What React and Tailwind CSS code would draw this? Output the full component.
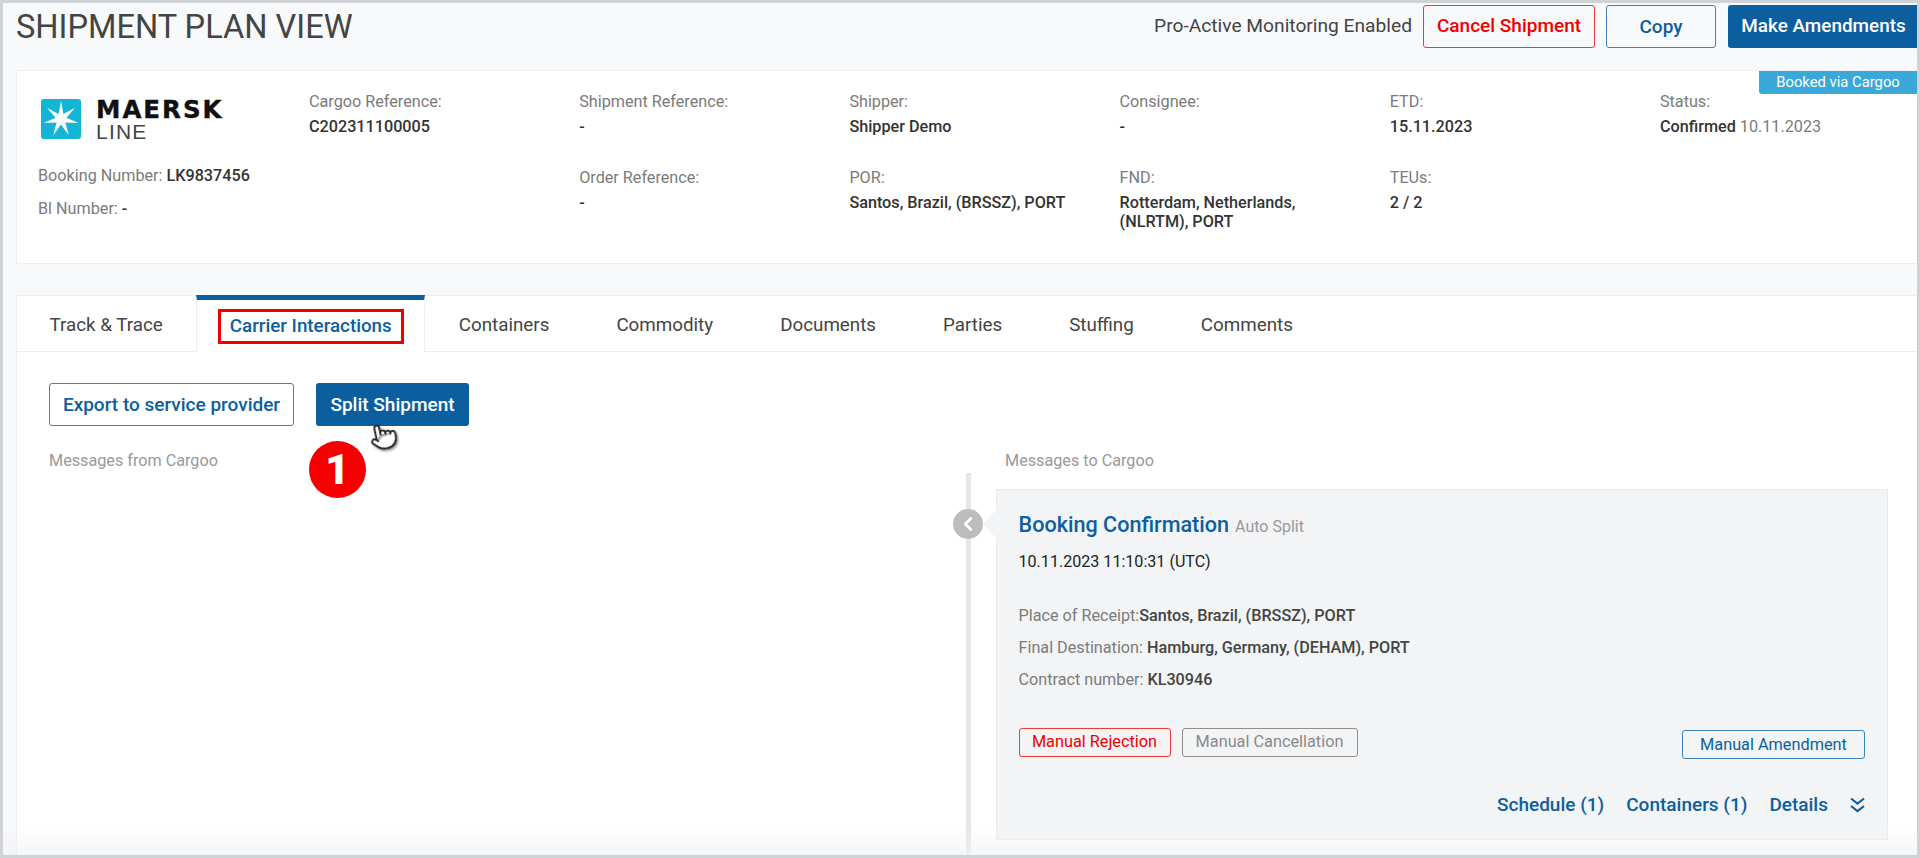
import React from 'react'
import { Pointer, ChevronLeft } from 'lucide-react'

const tabs = ['Track & Trace', 'Carrier Interactions', 'Containers', 'Commodity', 'Documents', 'Parties', 'Stuffing', 'Comments']

const starPoints = Array.from({ length: 14 }, (_, i) => {
  const r = i % 2 === 0 ? 18 : 5.6
  const a = (Math.PI * i) / 7 - Math.PI / 2
  return `${(20 + r * Math.cos(a)).toFixed(2)},${(20 + r * Math.sin(a)).toFixed(2)}`
}).join(' ')

const Info = ({ label, children, extra }) => (
  <div>
    <div className="h-6 text-[16.2px] leading-6 text-[#7b7b7b]">{label}</div>
    <div className="mt-[3px] w-[190px] text-[16.2px] leading-[19px] font-medium text-[#333]">
      {children}
      {extra && <span className="ml-1 font-normal text-[#7b7b7b]">{extra}</span>}
    </div>
  </div>
)

const Logo = () => (
  <div className="ml-[3px] flex h-10 items-start gap-[15px]">
    <svg viewBox="0 0 40 40" className="h-10 w-10 shrink-0">
      <rect width="40" height="40" rx="3" fill="#12b5d6" />
      <polygon points={starPoints} fill="#fff" />
    </svg>
    <div>
      <div className="font-['DejaVu_Sans',sans-serif] text-[24.5px] leading-[21px] font-bold tracking-[2px] text-[#111] [-webkit-text-stroke:0.4px_#111]">MAERSK</div>
      <div className="mt-[3px] font-['Liberation_Sans',sans-serif] text-[21px] leading-[18px] tracking-[1.2px] text-[#444]">LINE</div>
    </div>
  </div>
)

const DoubleChevron = () => (
  <svg viewBox="0 0 15 16" className="h-4 w-[15px]" fill="none" stroke="#0c5f9f" strokeWidth="2.2">
    <path d="M1 1.5l6.5 5 6.5-5" />
    <path d="M1 9l6.5 5 6.5-5" />
  </svg>
)

export default function App() {
  return (
    <div className="relative box-border flex h-[858px] w-[1920px] flex-col overflow-hidden border-[3px] border-[#d0d3d6] bg-[#f8f9fb] font-['Roboto',sans-serif]">
      {/* header */}
      <div className="flex h-[67px] shrink-0 items-start justify-between pt-[2px] pl-[13px]">
        <h1 className="text-[32.6px] leading-[44px] font-normal text-[#444]">SHIPMENT PLAN VIEW</h1>
        <div className="flex items-center">
          <span className="mr-[11px] text-[19.2px] text-[#444]">Pro-Active Monitoring Enabled</span>
          <button className="h-[43px] w-[172px] rounded-[3px] border border-[#f03a3a] text-[19px] font-medium text-[#f00000]">Cancel Shipment</button>
          <button className="ml-[11px] h-[43px] w-[110px] rounded-[3px] border border-[#3a85c0] pt-px text-[19px] font-medium text-[#0c5f9f]">Copy</button>
          <button className="ml-[12px] h-[43px] w-[189px] rounded-l-[3px] bg-[#0c5f9f] pl-[2px] text-[18.9px] font-medium text-white">Make Amendments</button>
        </div>
      </div>

      {/* summary card */}
      <div className="relative ml-[13px] h-[194px] shrink-0 rounded-l-[3px] border border-r-0 border-[#eceef0] bg-white pt-[19px] pl-[21px]">
        <div className="absolute top-0 right-0 flex h-[23px] w-[158px] items-center justify-center rounded-bl-[3px] bg-[#3aa8d8] text-[14.8px] text-white">Booked via Cargoo</div>
        <div className="grid grid-cols-[271px_repeat(6,270.2px)] grid-rows-[76px_auto]">
          <div className="row-span-2 pt-[9px]">
            <Logo />
            <div className="mt-[25px] text-[16.2px] leading-6 text-[#7b7b7b]">Booking Number: <span className="font-medium text-[#333]">LK9837456</span></div>
            <div className="mt-[9px] text-[16.2px] leading-6 text-[#7b7b7b]">Bl Number: <span className="font-medium text-[#333]">-</span></div>
          </div>
          <Info label="Cargoo Reference:">C202311100005</Info>
          <Info label="Shipment Reference:">-</Info>
          <Info label="Shipper:">Shipper Demo</Info>
          <Info label="Consignee:">-</Info>
          <Info label="ETD:">15.11.2023</Info>
          <Info label="Status:" extra="10.11.2023">Confirmed</Info>
          <div className="col-start-3"><Info label="Order Reference:">-</Info></div>
          <Info label="POR:"><span className="whitespace-nowrap">Santos, Brazil, (BRSSZ), PORT</span></Info>
          <Info label="FND:">Rotterdam, Netherlands, (NLRTM), PORT</Info>
          <Info label="TEUs:">2 / 2</Info>
        </div>
      </div>

      {/* tabs + content */}
      <div className="mt-[31px] ml-[13px] flex min-h-0 flex-1 flex-col border-l border-[#eceef0] bg-white">
        <div className="-ml-px flex h-[57px] shrink-0 border-t border-b border-[#eceef0]">
          {tabs.map((tab) =>
            tab === 'Carrier Interactions' ? (
              <div key={tab} className="-mt-px flex h-[57px] w-[229px] items-center justify-center border-x border-t-[5px] border-x-[#eceef0] border-t-[#0c5f9f] bg-white">
                <span className="flex h-[35px] w-[186px] items-center justify-center border-[3px] border-[#f00000] pt-px text-[18.8px] font-medium text-[#0c5f9f]">{tab}</span>
              </div>
            ) : (
              <div key={tab} className="flex items-center px-[33.5px] pt-[3px] text-[18.8px] text-[#444]">{tab}</div>
            )
          )}
        </div>

        <div className="flex min-h-0 flex-1">
          <div className="relative w-[949px] shrink-0 pt-[31px] pl-[32px]">
            <div className="flex gap-[22px]">
              <button className="h-[43px] w-[245px] rounded-[3px] border border-[#3a85c0] pt-[2px] text-[19px] font-medium text-[#0c5f9f]">Export to service provider</button>
              <button className="h-[43px] w-[153px] rounded-[3px] bg-[#0c5f9f] pt-[2px] text-[19px] font-medium text-white">Split Shipment</button>
            </div>
            <div className="mt-[23px] text-[16.2px] leading-6 text-[#999]">Messages from Cargoo</div>
            <Pointer size={29} fill="#fff" stroke="#222" strokeWidth={1.5} className="absolute top-[70px] left-[352px] -rotate-12 drop-shadow-[1px_2px_1px_rgba(0,0,0,0.4)]" />
            <div className="absolute top-[89px] left-[292px] flex h-[57px] w-[57px] items-center justify-center rounded-full bg-[#f50000] text-[42px] font-black text-white">1</div>
          </div>

          <div className="flex min-w-0 flex-1 flex-col pt-[97px]">
            <div className="ml-[39px] text-[16.2px] leading-6 text-[#999]">Messages to Cargoo</div>
            <div className="relative flex-1 border-l-[5px] border-[#e4e6e8] pt-4 pr-[29px] pl-[25px]">
              <div className="absolute top-[36px] left-[-18px] flex h-[30px] w-[30px] items-center justify-center rounded-full bg-[#bdbdbd]">
                <ChevronLeft size={22} stroke="#fff" strokeWidth={3} />
              </div>
              <div className="absolute top-[36px] left-[12px] h-0 w-0 border-y-[15px] border-r-[14px] border-y-transparent border-r-[#f2f4f6]" />
              <div className="h-[351px] border border-[#e8e9eb] bg-[#f2f4f6] pt-[21px] pr-[22px] pl-[21.5px]">
                <div className="flex items-baseline gap-[6px] leading-7">
                  <span className="text-[21.6px] font-medium text-[#0c5f9f]">Booking Confirmation</span>
                  <span className="text-[16px] text-[#999]">Auto Split</span>
                </div>
                <div className="mt-[9px] text-[16.1px] leading-6 text-[#222]">10.11.2023 11:10:31 (UTC)</div>
                <div className="mt-[30px] text-[16.2px] leading-6 text-[#7b7b7b]">Place of Receipt:<span className="font-medium text-[#444]">Santos, Brazil, (BRSSZ), PORT</span></div>
                <div className="mt-2 text-[16.2px] leading-6 text-[#7b7b7b]">Final Destination: <span className="font-medium text-[#444]">Hamburg, Germany, (DEHAM), PORT</span></div>
                <div className="mt-2 text-[16.2px] leading-6 text-[#7b7b7b]">Contract number: <span className="font-medium text-[#444]">KL30946</span></div>

                <div className="mt-9 flex h-8 items-start justify-between">
                  <div className="flex gap-[11px]">
                    <button className="h-[29px] w-[152px] rounded-[3px] border border-[#f03a3a] text-[16.3px] text-[#f00000]">Manual Rejection</button>
                    <button className="h-[29px] w-[176px] rounded-[3px] border border-[#8f8f8f] text-[16.3px] text-[#8a8a8a]">Manual Cancellation</button>
                  </div>
                  <button className="mt-[2px] h-[29px] w-[183px] rounded-[3px] border border-[#3a85c0] pt-px text-[16.3px] text-[#0c5f9f]">Manual Amendment</button>
                </div>

                <div className="mt-[33px] flex items-center justify-end gap-[22px] text-[19px] leading-6 font-medium text-[#0c5f9f]">
                  <span>Schedule (1)</span>
                  <span>Containers (1)</span>
                  <span>Details</span>
                  <DoubleChevron />
                </div>
              </div>
            </div>
          </div>
        </div>
      </div>

      {/* fade at the bottom of the capture */}
      <div className="pointer-events-none absolute inset-x-0 bottom-0 h-[30px] bg-gradient-to-b from-transparent to-[#f2f2f2]/70" />
    </div>
  )
}
